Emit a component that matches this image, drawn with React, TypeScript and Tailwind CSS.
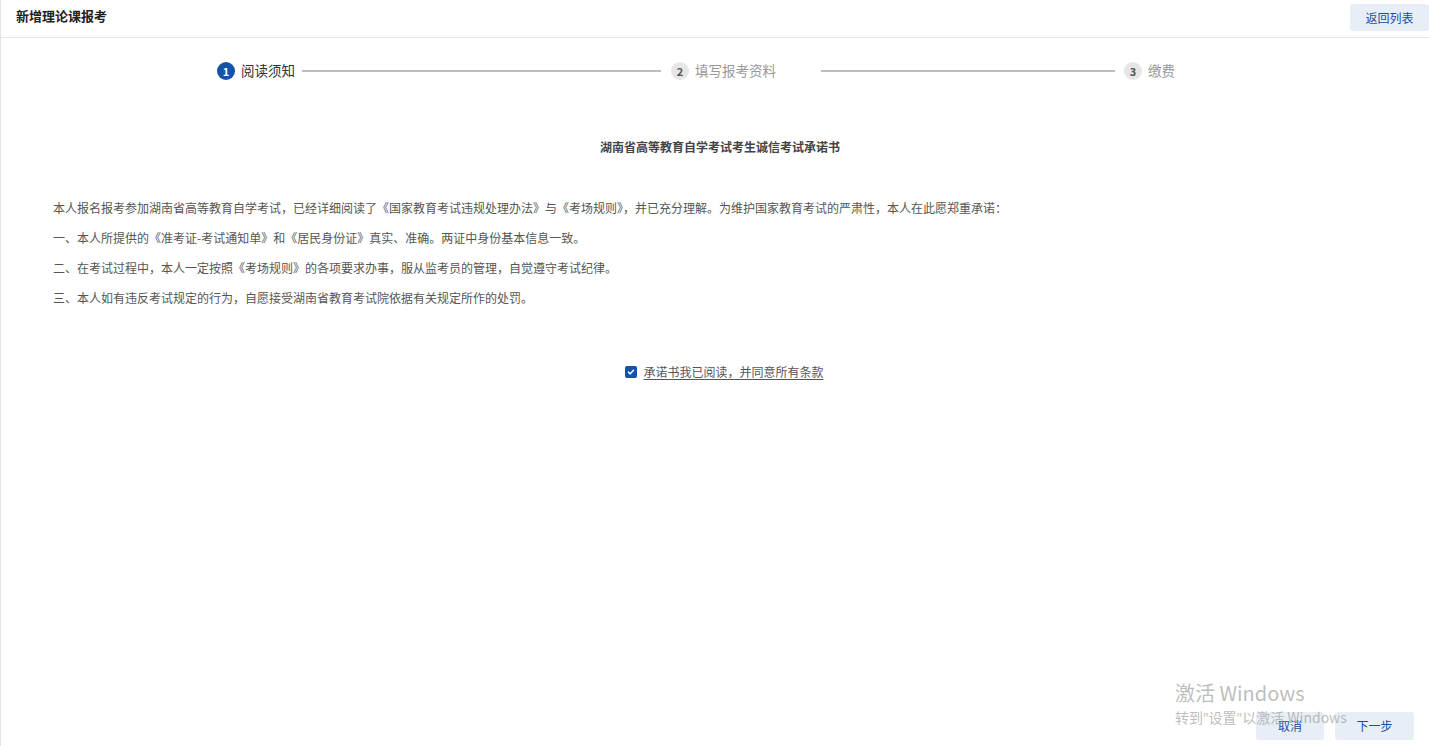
import React from "react";

const font = { fontFamily: '"Noto Sans CJK SC", "Noto Sans", sans-serif' };

function Circle({ n, active }: { n: number; active?: boolean }) {
  return (
    <div
      className={
        "flex h-[18px] w-[18px] shrink-0 items-center justify-center rounded-full text-[11px] font-bold leading-none " +
        (active ? "bg-[#1553a8] text-white" : "bg-[#e6e6e6] text-[#555]")
      }
    >
      {n}
    </div>
  );
}

export default function App() {
  const paras = [
    "本人报名报考参加湖南省高等教育自学考试，已经详细阅读了《国家教育考试违规处理办法》与《考场规则》，并已充分理解。为维护国家教育考试的严肃性，本人在此愿郑重承诺：",
    "一、本人所提供的《准考证-考试通知单》和《居民身份证》真实、准确。两证中身份基本信息一致。",
    "二、在考试过程中，本人一定按照《考场规则》的各项要求办事，服从监考员的管理，自觉遵守考试纪律。",
    "三、本人如有违反考试规定的行为，自愿接受湖南省教育考试院依据有关规定所作的处罚。",
  ];
  const latin = { fontFamily: '"Open Sans", "Noto Sans", sans-serif' };
  return (
    <div style={font} className="relative flex h-[746px] w-full flex-col overflow-hidden border-l border-[#e4e4e4] bg-white">
      {/* header */}
      <div className="flex h-[38px] shrink-0 items-start justify-between border-b border-[#e6e6e6]">
        <div className="pl-[15px] pt-[6px] text-[13px] font-bold leading-[20px] text-[#222]">新增理论课报考</div>
        <button className="mt-[4px] flex h-[27px] w-[79px] items-center justify-center rounded-[3px] bg-[#e8eef6] text-[12px] text-[#1a4f9c]">
          返回列表
        </button>
      </div>

      {/* steps */}
      <div className="mt-[24px] flex h-[18px] items-center pl-[216px]">
        <div className="flex w-[454px] items-center">
          <Circle n={1} active />
          <span className="ml-[6px] text-[13.5px] leading-none text-[#333]">阅读须知</span>
          <div className="ml-[7px] mr-[10px] h-[2px] flex-1 bg-[#bdbdbd]" />
        </div>
        <div className="flex w-[453px] items-center">
          <Circle n={2} />
          <span className="ml-[6px] text-[13.5px] leading-none text-[#999]">填写报考资料</span>
          <div className="ml-[45px] mr-[9px] h-[2px] flex-1 bg-[#bdbdbd]" />
        </div>
        <div className="flex items-center">
          <Circle n={3} />
          <span className="ml-[6px] text-[13.5px] leading-none text-[#999]">缴费</span>
        </div>
      </div>

      {/* title */}
      <div className="mt-[59px] pl-[10px] text-center text-[12px] font-bold leading-[16px] text-[#444]">
        湖南省高等教育自学考试考生诚信考试承诺书
      </div>

      {/* paragraphs */}
      <div className="mt-[44px] flex flex-col gap-[12px] pl-[52px]">
        {paras.map((p) => (
          <p key={p} className="text-[12px] leading-[18px] text-[#555]">
            {p}
          </p>
        ))}
      </div>

      {/* agree */}
      <div className="mt-[57px] flex items-center justify-center gap-[6px] pl-[19px]">
        <span className="flex h-[12px] w-[12px] items-center justify-center rounded-[2px] bg-[#1553a8]">
          <svg viewBox="0 0 12 12" className="h-[10px] w-[10px]">
            <path d="M3 6.2 L5.1 8.2 L9 4" fill="none" stroke="white" strokeWidth="1.8" strokeLinecap="round" strokeLinejoin="round" />
          </svg>
        </span>
        <span className="text-[12px] leading-[16px] text-[#555] underline underline-offset-2">
          承诺书我已阅读，并同意所有条款
        </span>
      </div>

      <div className="flex-1" />

      {/* footer buttons */}
      <div className="flex justify-end gap-[11px] pb-[6px] pr-[15px]">
        <button className="flex h-[28px] w-[68px] items-center justify-center rounded-[3px] bg-[#e8eef6] text-[12px] text-[#1a4f9c]">
          取消
        </button>
        <button className="flex h-[28px] w-[79px] items-center justify-center rounded-[3px] bg-[#e8eef6] text-[12px] text-[#1a4f9c]">
          下一步
        </button>
      </div>

      {/* windows watermark */}
      <div className="pointer-events-none absolute left-[1174px] top-[680px] text-[#a0a0a0]/70">
        <div className="text-[20px] leading-[26px]" style={{ fontFamily: '"Noto Sans CJK SC", "Open Sans", sans-serif' }}>激活 Windows</div>
        <div className="mt-[1px] whitespace-nowrap text-[14px] leading-[20px]">
          转到<span style={latin}>"</span>设置<span style={latin}>"</span>以激活 Windows
        </div>
      </div>
    </div>
  );
}
